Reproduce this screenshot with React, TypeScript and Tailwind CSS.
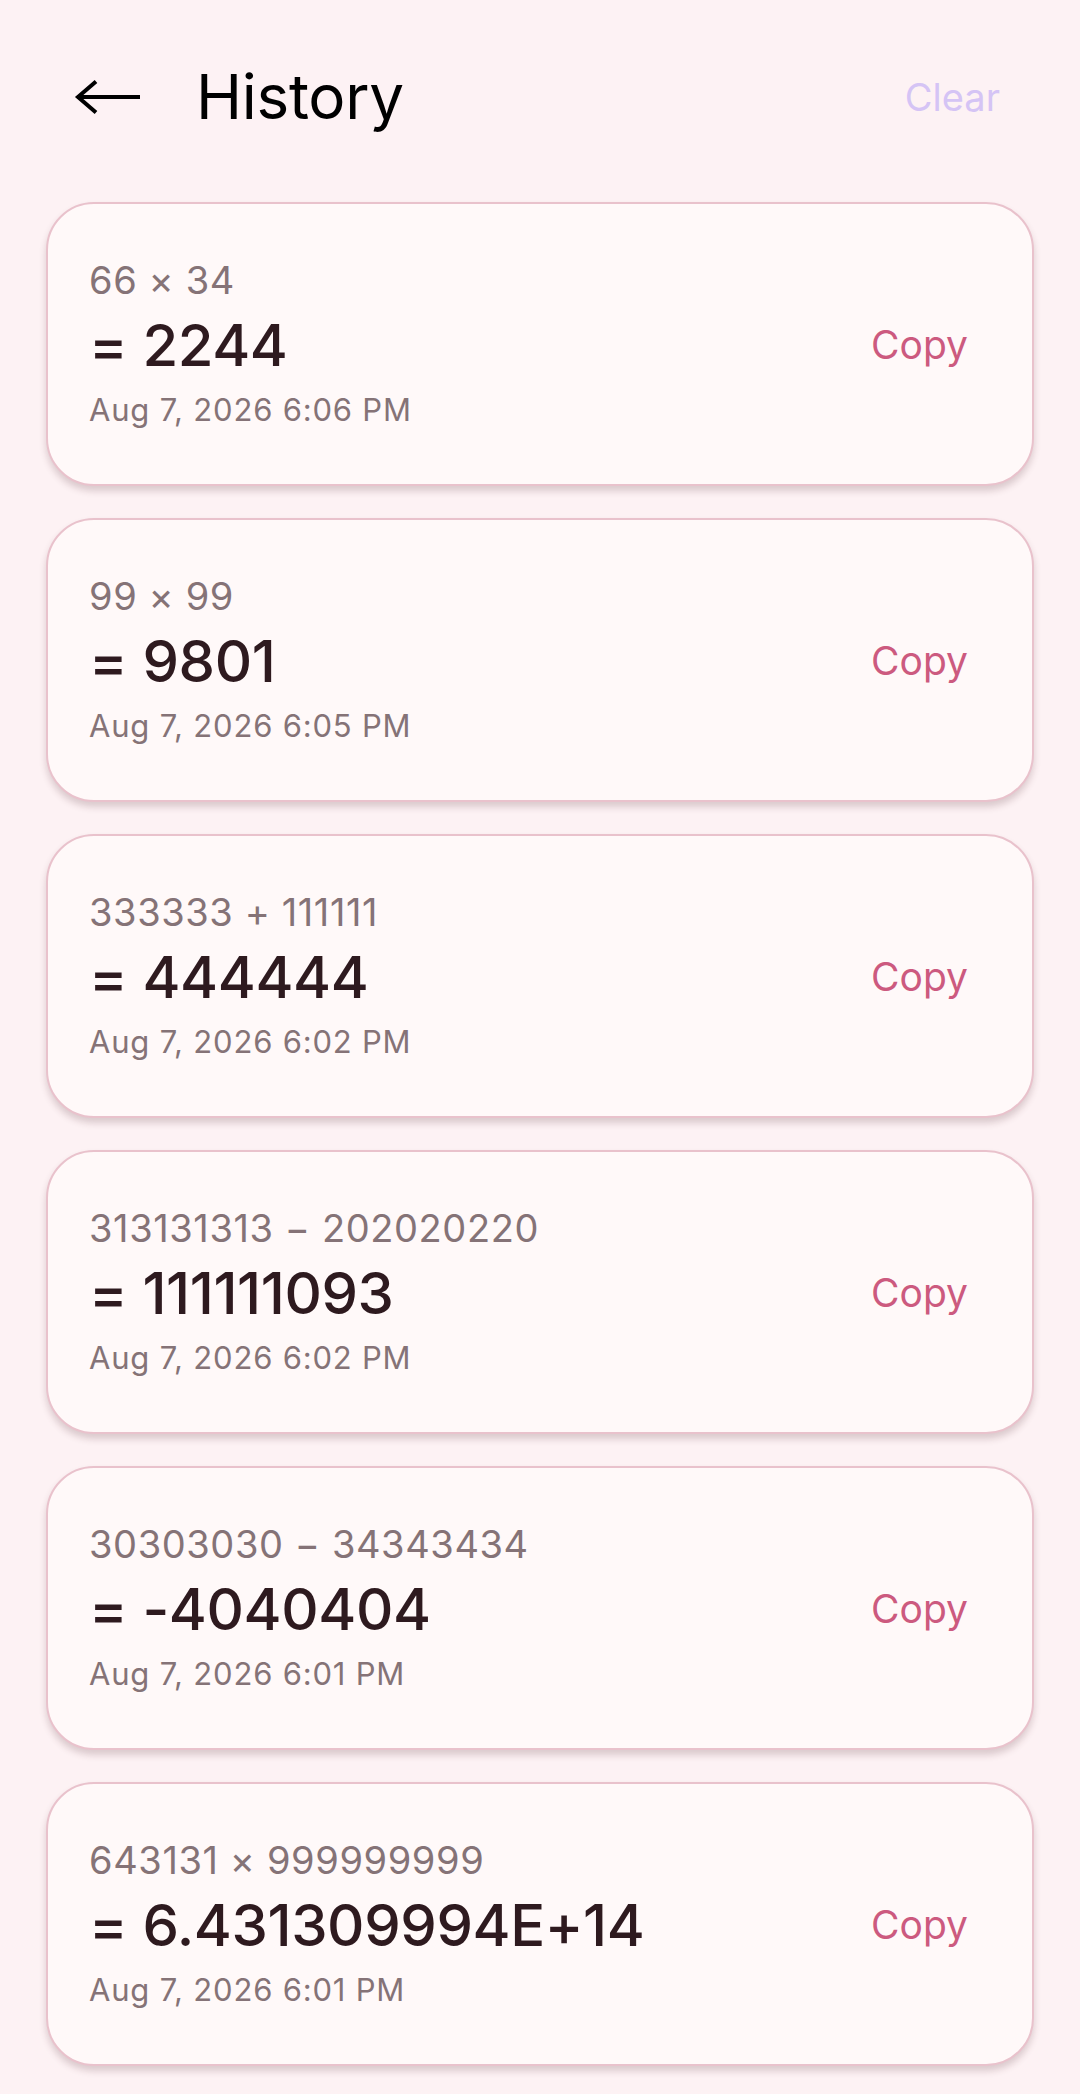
import { useState } from "react";

interface HistoryEntry {
  id: number;
  expression: string;
  result: string;
  time: string;
}

const entries: HistoryEntry[] = [
  { id: 1, expression: "66 × 34", result: "2244", time: "Aug 7, 2026 6:06 PM" },
  { id: 2, expression: "99 × 99", result: "9801", time: "Aug 7, 2026 6:05 PM" },
  { id: 3, expression: "333333 + 111111", result: "444444", time: "Aug 7, 2026 6:02 PM" },
  { id: 4, expression: "313131313 − 202020220", result: "111111093", time: "Aug 7, 2026 6:02 PM" },
  { id: 5, expression: "30303030 − 34343434", result: "-4040404", time: "Aug 7, 2026 6:01 PM" },
  { id: 6, expression: "643131 × 999999999", result: "6.431309994E+14", time: "Aug 7, 2026 6:01 PM" },
];

function BackArrow() {
  return (
    <svg width="68" height="36" viewBox="0 0 68 36" fill="none" stroke="#000" strokeWidth="4" strokeLinecap="butt" strokeLinejoin="miter">
      <path d="M3 18 H66" />
      <path d="M22 2.5 L4 18 L22 33.5" />
    </svg>
  );
}

export default function App() {
  const [copied, setCopied] = useState<number | null>(null);

  return (
    <div
      className="min-h-[2094px] w-full bg-[#fdf2f4]"
      style={{ fontFamily: "Inter, Roboto, 'Noto Sans', sans-serif" }}
    >
      {/* Top bar */}
      <div className="flex h-[194px] items-center pl-[74px] pr-[80px]">
        <button className="flex items-center">
          <BackArrow />
        </button>
        <h1 className="ml-[54px] text-[62px] leading-none tracking-[-0.3px] text-black">History</h1>
        <button className="ml-auto text-[38px] leading-none text-[#d5c4f5]">Clear</button>
      </div>

      {/* History list */}
      <div className="flex flex-col gap-8 px-[46px] pt-2">
        {entries.map((entry) => (
          <div
            key={entry.id}
            className="flex h-[284px] items-center justify-between rounded-[48px] border-2 border-[#e9c2cc] bg-[#fff9f9] pl-[41px] pr-[64px] shadow-[0_5px_7px_rgba(80,40,50,0.2)]"
          >
            <div className="flex flex-col">
              <span className="-mt-[2px] text-[38px] leading-[46px] tracking-[0.6px] text-[#857377]">
                {entry.expression}
              </span>
              <span className="mt-[6px] text-[58px] font-medium leading-[72px] tracking-[-0.4px] text-[#2e1a1f]">
                = {entry.result}
              </span>
              <span className="mt-[10px] text-[31px] leading-[38px] tracking-[0.8px] text-[#857377]">
                {entry.time}
              </span>
            </div>
            <button
              onClick={() => setCopied(entry.id)}
              className="text-[39px] leading-none text-[#cc5a7f]"
            >
              {copied === entry.id ? "Copy" : "Copy"}
            </button>
          </div>
        ))}
      </div>
    </div>
  );
}
